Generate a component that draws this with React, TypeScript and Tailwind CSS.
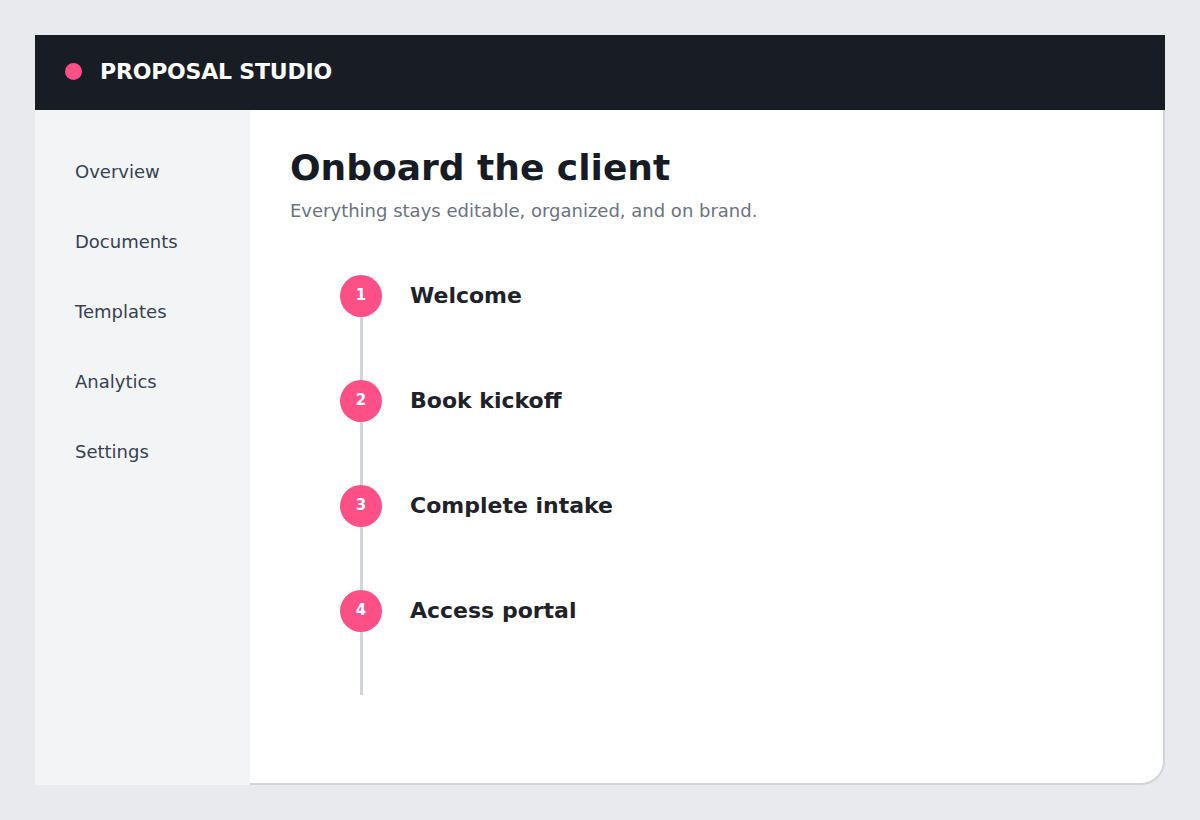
import React from 'react';

const navItems = ['Overview', 'Documents', 'Templates', 'Analytics', 'Settings'];
const steps = ['Welcome', 'Book kickoff', 'Complete intake', 'Access portal'];

const App: React.FC = () => {
  return (
    <div
      className="w-[1200px] h-[820px] bg-[#e9eaee] p-[35px]"
      style={{ fontFamily: '"DejaVu Sans", "Liberation Sans", sans-serif' }}
    >
      <div className="w-[1130px] h-[750px] flex flex-col">
        {/* header */}
        <header className="h-[75px] shrink-0 bg-[#181c25] flex items-center pl-[30px] pb-[3px]">
          <span className="w-[17px] h-[17px] rounded-full bg-[#ff4f87]" />
          <span className="ml-[18px] text-white font-bold text-[22px] tracking-[-0.2px]">PROPOSAL STUDIO</span>
        </header>

        <div className="flex flex-1 min-h-0">
          {/* sidebar */}
          <nav className="w-[215px] shrink-0 bg-[#f3f4f6] pt-[26px]">
            {navItems.map((item) => (
              <div key={item} className="h-[70px] flex items-center pl-[40px] text-[18px] text-[#374151]">
                {item}
              </div>
            ))}
          </nav>

          {/* main */}
          <main className="flex-1 bg-white border-r-2 border-b-2 border-[#d1d5db] rounded-br-[24px] pl-[40px] pt-[40px]">
            <h1 className="text-[36px] leading-none font-bold text-[#171b24]">Onboard the client</h1>
            <p className="mt-[13px] text-[18px] leading-[24px] text-[#6b7280]">
              Everything stays editable, organized, and on brand.
            </p>

            <div className="mt-[52px] ml-[50px]">
              {steps.map((step, i) => (
                <div key={step} className="flex">
                  <div className="flex flex-col items-center w-[42px]">
                    <div className="w-[42px] h-[42px] rounded-full bg-[#ff4f87] flex items-center justify-center text-white font-bold text-[15px] pb-[1px]">
                      {i + 1}
                    </div>
                    <div className="w-[3px] h-[63px] bg-[#d1d5db]" />
                  </div>
                  <div className="ml-[28px] h-[42px] flex items-center pb-[2px] text-[22px] font-bold text-[#1f2229]">
                    {step}
                  </div>
                </div>
              ))}
            </div>
          </main>
        </div>
      </div>
    </div>
  );
};

export default App;
